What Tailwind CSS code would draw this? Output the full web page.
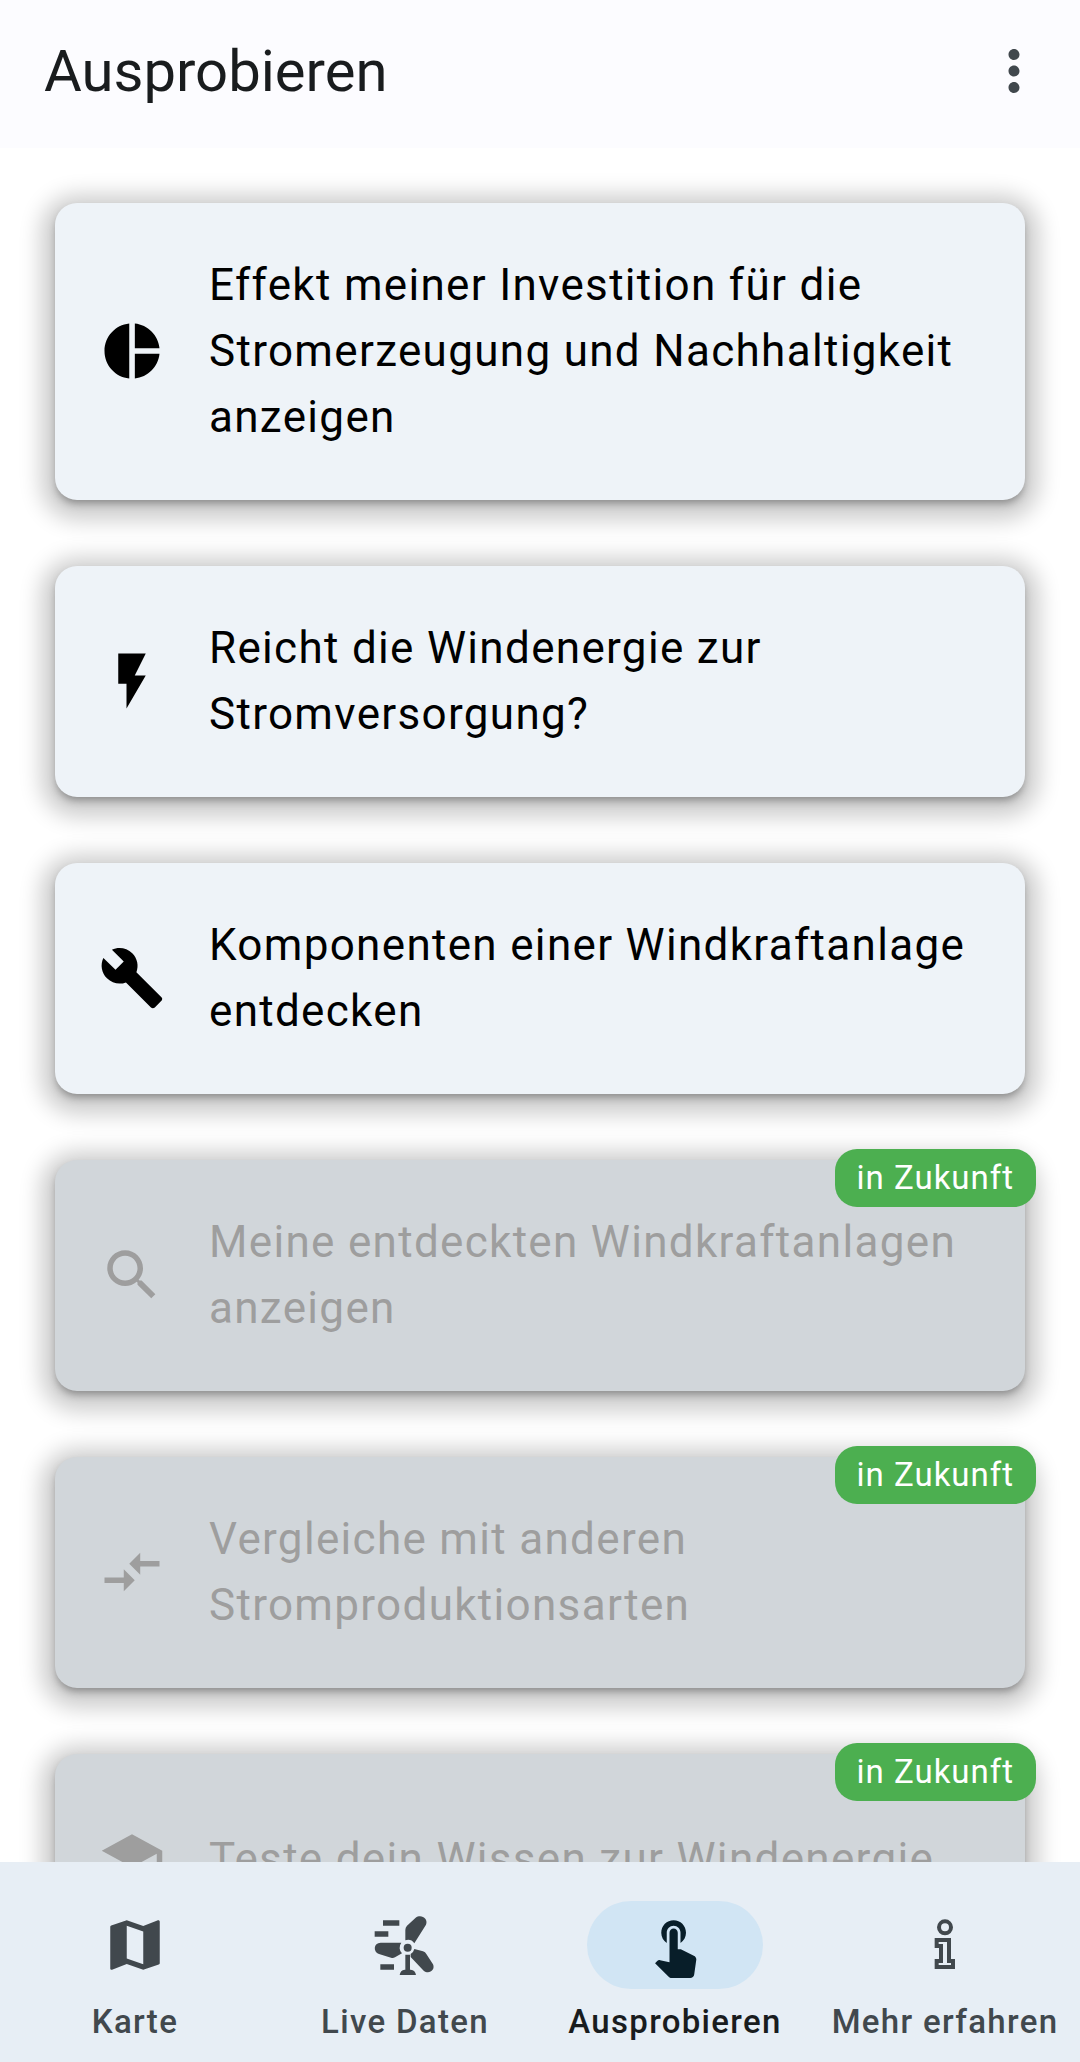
<!DOCTYPE html>
<html lang="de">
<head>
    <meta charset="UTF-8">
    <meta name="viewport" content="width=device-width, initial-scale=1.0">
    <title>Ausprobieren</title>
    <script src="https://cdn.jsdelivr.net/npm/@tailwindcss/browser@4"></script>
</head>
<body class="flex h-screen flex-col bg-white font-[Roboto,sans-serif] text-black">
    <header class="flex shrink-0 items-center justify-between bg-[#fcfcff] pt-9 pr-[33px] pb-[42px] pl-11">
        <h1 class="text-[58px] leading-[70px] text-[#191c1e]">Ausprobieren</h1>
        <button type="button" aria-label="Menü" class="text-[#41484d]">
            <svg class="size-[66px]" viewBox="0 0 24 24" fill="currentColor"><path d="M12 8c1.1 0 2-.9 2-2s-.9-2-2-2-2 .9-2 2 .9 2 2 2zm0 2c-1.1 0-2 .9-2 2s.9 2 2 2 2-.9 2-2-.9-2-2-2zm0 6c-1.1 0-2 .9-2 2s.9 2 2 2 2-.9 2-2-.9-2-2-2z"/></svg>
        </button>
    </header>

    <main class="min-h-0 flex-1 overflow-y-auto px-[55px] py-[55px] [scrollbar-width:none]">
        <ul class="flex flex-col gap-[66px]">
            <li>
                <button type="button" class="flex w-full items-center gap-11 rounded-[22px] bg-[#eef3f8] px-11 pt-[49px] pb-[50px] text-left text-[44px] leading-[66px] tracking-[0.03em] shadow-[0_6px_22px_14px_rgb(0_0_0/0.2),0_5px_8px_-2px_rgb(0_0_0/0.35)]">
                    <svg class="size-[66px] shrink-0" viewBox="0 0 24 24" fill="currentColor"><path d="M11 2v20c-5.07-.5-9-4.79-9-10s3.93-9.5 9-10zm2.03 0v8.99H22c-.47-4.74-4.24-8.52-8.97-8.99zm0 11.01V22c4.74-.47 8.5-4.25 8.97-8.99h-8.97z"/></svg>
                    <span>Effekt meiner Investition für die Stromerzeugung und Nachhaltigkeit anzeigen</span>
                </button>
            </li>
            <li>
                <button type="button" class="flex w-full items-center gap-11 rounded-[22px] bg-[#eef3f8] px-11 pt-[49px] pb-[50px] text-left text-[44px] leading-[66px] tracking-[0.03em] shadow-[0_6px_22px_14px_rgb(0_0_0/0.2),0_5px_8px_-2px_rgb(0_0_0/0.35)]">
                    <svg class="size-[66px] shrink-0" viewBox="0 0 24 24" fill="currentColor"><path d="M7 2v11h3v9l7-12h-4l4-8z"/></svg>
                    <span>Reicht die Windenergie zur Stromversorgung?</span>
                </button>
            </li>
            <li>
                <button type="button" class="flex w-full items-center gap-11 rounded-[22px] bg-[#eef3f8] px-11 pt-[49px] pb-[50px] text-left text-[44px] leading-[66px] tracking-[0.03em] shadow-[0_6px_22px_14px_rgb(0_0_0/0.2),0_5px_8px_-2px_rgb(0_0_0/0.35)]">
                    <svg class="size-[66px] shrink-0" viewBox="0 0 24 24" fill="currentColor"><path d="M22.7 19l-9.1-9.1c.9-2.3.4-5-1.5-6.9-2-2-5-2.4-7.4-1.3L9 6 6 9 1.6 4.7C.4 7.1.9 10.1 2.9 12.1c1.9 1.9 4.6 2.4 6.9 1.5l9.1 9.1c.4.4 1 .4 1.4 0l2.3-2.3c.5-.4.5-1.1.1-1.4z"/></svg>
                    <span>Komponenten einer Windkraftanlage entdecken</span>
                </button>
            </li>

            <!-- Coming soon -->
            <li class="relative">
                <button type="button" disabled class="flex w-full items-center gap-11 rounded-[22px] bg-[#d1d6da] px-11 pt-[49px] pb-[50px] text-left text-[44px] leading-[66px] tracking-[0.03em] text-[#9e9e9e] shadow-[0_6px_22px_14px_rgb(0_0_0/0.2),0_5px_8px_-2px_rgb(0_0_0/0.35)]">
                    <svg class="size-[66px] shrink-0" viewBox="0 0 24 24" fill="currentColor"><path d="M15.5 14h-.79l-.28-.27C15.41 12.59 16 11.11 16 9.5 16 5.91 13.09 3 9.5 3S3 5.91 3 9.5 5.91 16 9.5 16c1.61 0 3.09-.59 4.23-1.57l.27.28v.79l5 4.99L20.49 19l-4.99-5zm-6 0C7.01 14 5 11.99 5 9.5S7.01 5 9.5 5 14 7.01 14 9.5 11.99 14 9.5 14z"/></svg>
                    <span>Meine entdeckten Windkraftanlagen anzeigen</span>
                </button>
                <span class="absolute -top-[11px] -right-[11px] rounded-[22px] bg-[#4caf50] px-[22px] py-[11px] text-[33px] leading-9 tracking-[0.03em] text-white">in Zukunft</span>
            </li>
            <li class="relative">
                <button type="button" disabled class="flex w-full items-center gap-11 rounded-[22px] bg-[#d1d6da] px-11 pt-[49px] pb-[50px] text-left text-[44px] leading-[66px] tracking-[0.03em] text-[#9e9e9e] shadow-[0_6px_22px_14px_rgb(0_0_0/0.2),0_5px_8px_-2px_rgb(0_0_0/0.35)]">
                    <svg class="size-[66px] shrink-0" viewBox="0 0 24 24" fill="currentColor"><path d="M9.01 14H2v2h7.01v3L13 15l-3.99-4v3zm5.98-1v-3H22V8h-7.01V5L11 9l3.99 4z"/></svg>
                    <span>Vergleiche mit anderen Stromproduktionsarten</span>
                </button>
                <span class="absolute -top-[11px] -right-[11px] rounded-[22px] bg-[#4caf50] px-[22px] py-[11px] text-[33px] leading-9 tracking-[0.03em] text-white">in Zukunft</span>
            </li>
            <li class="relative">
                <button type="button" disabled class="flex min-h-[210px] w-full items-center gap-11 rounded-[22px] bg-[#d1d6da] px-11 pt-[49px] pb-[50px] text-left text-[44px] leading-[66px] tracking-[0.03em] text-[#9e9e9e] shadow-[0_6px_22px_14px_rgb(0_0_0/0.2),0_5px_8px_-2px_rgb(0_0_0/0.35)]">
                    <svg class="size-[66px] shrink-0" viewBox="0 0 24 24" fill="currentColor"><path d="M5 13.18v4L12 21l7-3.82v-4L12 17l-7-3.82zM12 3L1 9l11 6 9-4.91V17h2V9L12 3z"/></svg>
                    <span>Teste dein Wissen zur Windenergie</span>
                </button>
                <span class="absolute -top-[11px] -right-[11px] rounded-[22px] bg-[#4caf50] px-[22px] py-[11px] text-[33px] leading-9 tracking-[0.03em] text-white">in Zukunft</span>
            </li>
        </ul>
    </main>

    <nav class="relative grid shrink-0 grid-cols-4 bg-[#e7eef5] pt-[39px] pb-[18px] text-[33px] leading-11 font-medium tracking-[0.04em] whitespace-nowrap text-[#41484d]">
        <a href="#karte" class="flex flex-col items-center gap-[11px]">
            <span class="flex h-[88px] w-44 items-center justify-center rounded-full">
                <svg class="size-[66px]" viewBox="0 0 24 24" fill="currentColor"><path d="M20.5 3l-.16.03L15 5.1 9 3 3.36 4.9c-.21.07-.36.25-.36.48V20.5c0 .28.22.5.5.5l.16-.03L9 18.9l6 2.1 5.64-1.9c.21-.07.36-.25.36-.48V3.5c0-.28-.22-.5-.5-.5zM15 19l-6-2.11V5l6 2.11V19z"/></svg>
            </span>
            Karte
        </a>
        <a href="#live-daten" class="flex flex-col items-center gap-[11px]">
            <span class="flex h-[88px] w-44 items-center justify-center rounded-full">
                <!-- Wind turbine -->
                <svg class="size-[66px]" viewBox="36 36 198 198" fill="currentColor">
                    <path d="M69 61h49v16H69zM44 94h41v16H44zM61 193h41v16H61z"/>
                    <path d="M136 125V90Q136 82 141 77L167 53C182 41 206 54 198 74L163 130A24 24 0 0 0 136 121z"/>
                    <path d="M124 128H62C40 129 39 155 57 162L93 173Q99 175 105 172L126 160A24 24 0 0 1 124 128z"/>
                    <path d="M163 147L189 154Q196 156 199 162L219 193C227 211 206 224 191 212L152 171V162A23 23 0 0 0 163 147z"/>
                    <path d="M136 164h14v45h2Q166 210 168 225H119Q121 210 134 209h2z"/>
                    <circle cx="143" cy="143" r="12"/>
                </svg>
            </span>
            Live Daten
        </a>
        <a href="#ausprobieren" aria-current="page" class="flex flex-col items-center gap-[11px] text-[#191c1e]">
            <span class="flex h-[88px] w-44 items-center justify-center rounded-full bg-[#d1e5f4] text-[#081e29]">
                <svg class="size-[66px]" viewBox="0 0 24 24" fill="currentColor"><path d="M9 11.24V7.5C9 6.12 10.12 5 11.5 5S14 6.12 14 7.5v3.74c1.21-.81 2-2.18 2-3.74C16 5.01 13.99 3 11.5 3S7 5.01 7 7.5c0 1.56.79 2.93 2 3.74zm9.84 4.63l-4.54-2.26c-.17-.07-.35-.11-.54-.11H13v-6c0-.83-.67-1.5-1.5-1.5S10 6.67 10 7.5v10.74l-3.43-.72c-.08-.01-.15-.03-.24-.03-.31 0-.59.13-.79.33l-.79.8 4.94 4.94c.27.27.65.44 1.06.44h6.79c.75 0 1.33-.55 1.44-1.28l.75-5.27c.01-.07.02-.14.02-.2 0-.62-.38-1.16-.91-1.38z"/></svg>
            </span>
            Ausprobieren
        </a>
        <a href="#mehr-erfahren" class="flex flex-col items-center gap-[11px]">
            <span class="flex h-[88px] w-44 items-center justify-center rounded-full">
                <svg class="size-[66px]" viewBox="816 36 198 198" fill="none" stroke="currentColor" stroke-width="12">
                    <circle cx="915" cy="82" r="18"/>
                    <path d="M890 120H927V183H939V201H890V183H903V138H890z"/>
                </svg>
            </span>
            Mehr erfahren
        </a>
    </nav>
</body>
</html>
